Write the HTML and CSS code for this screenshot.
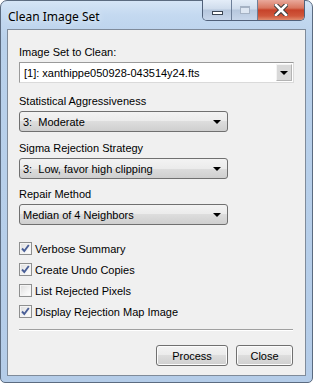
FILE: index.html
```html
<!DOCTYPE html>
<html lang="en">

<head>
    <meta charset="UTF-8">
    <title>Clean Image Set</title>
    <link rel="stylesheet" href="styles.css">
</head>

<body>
    <div class="window">
        <div class="titlebar">
            <div class="title">Clean Image Set</div>
            <div class="caption-buttons">
                <div class="cap-btn cap-min"><span class="min-glyph"></span></div>
                <div class="cap-btn cap-max"><span class="max-glyph"></span></div>
                <div class="cap-btn cap-close">
                    <svg width="14" height="12" viewBox="0 0 14 12">
                        <path d="M2 1 L12 11 M12 1 L2 11" stroke="#3b3b3b" stroke-width="4.6" stroke-linecap="square" />
                        <path d="M2 1 L12 11 M12 1 L2 11" stroke="#ffffff" stroke-width="2.6" stroke-linecap="square" />
                    </svg>
                </div>
            </div>
        </div>

        <div class="client">
            <div class="field field-set">
                <label>Image Set to Clean:</label>
                <div class="combo-edit">
                    <span class="combo-text">[1]: xanthippe050928-043514y24.fts</span>
                    <span class="combo-edit-btn"><span class="arrow"></span></span>
                </div>
            </div>

            <div class="field field-stat">
                <label>Statistical Aggressiveness</label>
                <div class="combo-list">
                    <span class="combo-text">3:&nbsp; Moderate</span>
                    <span class="arrow"></span>
                </div>
            </div>

            <div class="field field-sigma">
                <label>Sigma Rejection Strategy</label>
                <div class="combo-list">
                    <span class="combo-text">3:&nbsp; Low, favor high clipping</span>
                    <span class="arrow"></span>
                </div>
            </div>

            <div class="field field-repair">
                <label>Repair Method</label>
                <div class="combo-list">
                    <span class="combo-text">Median of 4 Neighbors</span>
                    <span class="arrow"></span>
                </div>
            </div>

            <div class="checks">
                <div class="check-row">
                    <span class="box checked"></span>Verbose Summary
                </div>
                <div class="check-row">
                    <span class="box checked"></span>Create Undo Copies
                </div>
                <div class="check-row">
                    <span class="box"></span>List Rejected Pixels
                </div>
                <div class="check-row">
                    <span class="box checked"></span>Display Rejection Map Image
                </div>
            </div>

            <div class="separator"></div>

            <div class="actions">
                <button class="btn btn-process">Process</button>
                <button class="btn btn-close">Close</button>
            </div>
        </div>
    </div>
</body>

</html>
```

FILE: styles.css
```css
* {
    margin: 0;
    padding: 0;
    box-sizing: border-box;
}

body {
    width: 313px;
    height: 383px;
    background: #ffffff;
    font-family: 'Liberation Sans', Arial, sans-serif;
    font-size: 11px;
    color: #000000;
    overflow: hidden;
}

.window {
    width: 313px;
    height: 383px;
    display: flex;
    flex-direction: column;
    border: 1px solid #5b6b80;
    border-radius: 7px 7px 5px 5px;
    background: linear-gradient(#d5e5f6 0, #c4d9f0 14px, #b9d1eb 40px, #b4cce8 100%);
    padding: 0 6px 6px 6px;
}

/* title bar */
.titlebar {
    height: 28px;
    display: flex;
    justify-content: space-between;
    align-items: flex-start;
}

.title {
    font-family: 'Noto Sans', sans-serif;
    font-size: 12px;
    padding: 7px 0 0 1px;
    text-shadow: 0 0 6px rgba(255, 255, 255, 0.9);
}

.caption-buttons {
    display: flex;
    margin-top: -1px;
    margin-right: 1px;
    height: 21px;
    border: 1px solid #51617a;
    border-top: none;
    border-radius: 0 0 5px 5px;
    overflow: hidden;
}

.cap-btn {
    height: 100%;
    display: flex;
    justify-content: center;
    align-items: center;
    background: linear-gradient(#e4edf8 0, #cfdcec 45%, #b6c7dd 50%, #c7d6ea 100%);
    border-right: 1px solid #6d7f99;
}

.cap-min {
    width: 29px;
}

.cap-max {
    width: 26px;
}

.cap-close {
    width: 46px;
    border-right: none;
    background: linear-gradient(#e9a99b 0, #d8765f 40%, #c7432a 50%, #d0583c 80%, #e08b6d 100%);
}

.min-glyph {
    width: 11px;
    height: 4px;
    margin-top: 6px;
    background: #ffffff;
    border: 1px solid #3c4654;
}

.max-glyph {
    width: 10px;
    height: 8px;
    border: 1px solid #a5b2c4;
    border-top-width: 2px;
    background: #dde6f2;
}

/* client area */
.client {
    flex: 1;
    background: #f0f0f0;
    border: 1px solid #7f8b9a;
    padding: 16px 11px 0 11px;
    display: flex;
    flex-direction: column;
}

.field {
    display: flex;
    flex-direction: column;
}

.field-set {
    margin-bottom: 12px;
}

.field-stat {
    margin-bottom: 10px;
}

.field-sigma {
    margin-bottom: 9px;
}

.field-repair {
    margin-bottom: 12px;
}

.field label {
    line-height: 13px;
    margin-bottom: 3px;
}

.combo-text {
    flex: 1;
    white-space: nowrap;
    overflow: hidden;
}

.arrow {
    width: 0;
    height: 0;
    border-left: 4px solid transparent;
    border-right: 4px solid transparent;
    border-top: 4px solid #000000;
}

.combo-edit {
    width: 275px;
    height: 21px;
    display: flex;
    align-items: center;
    background: #ffffff;
    border: 1px solid #9a9a9a;
    border-right-color: #dadada;
    border-bottom-color: #dadada;
    padding: 0 1px 0 4px;
}

.combo-edit-btn {
    width: 16px;
    height: 17px;
    display: flex;
    justify-content: center;
    align-items: center;
    background: #d9d9d9;
    border: 1px solid #b4b4b4;
    border-top-color: #f4f4f4;
    border-left-color: #f4f4f4;
}

.combo-list {
    width: 209px;
    height: 21px;
    display: flex;
    align-items: center;
    border: 1px solid #707070;
    border-radius: 3px;
    background: linear-gradient(#f3f3f3 0, #ebebeb 50%, #dddddd 50%, #cfcfcf 100%);
    padding: 0 6px 0 3px;
}

/* check boxes */
.checks {
    display: flex;
    flex-direction: column;
    margin-top: 1px;
}

.check-row {
    height: 21px;
    display: flex;
    align-items: center;
}

.box {
    width: 13px;
    height: 13px;
    margin-right: 3px;
    border: 1px solid #8e8f8f;
    background: linear-gradient(135deg, #dcdcdc 0, #f4f4f4 60%, #ffffff 100%);
    box-shadow: inset 0 0 0 1px #f4f4f4;
}

.box.checked {
    background:
        url("data:image/svg+xml;utf8,<svg xmlns='http://www.w3.org/2000/svg' width='11' height='11' viewBox='0 0 11 11'><path d='M2 5.5 L4.3 8 L8.8 2' fill='none' stroke='%234a5f97' stroke-width='1.9'/></svg>") center / 11px 11px no-repeat,
        linear-gradient(135deg, #dcdcdc 0, #f4f4f4 60%, #ffffff 100%);
}

/* bottom */
.separator {
    margin-top: 7px;
    width: 274px;
    border-top: 1px solid #a0a0a0;
    border-bottom: 1px solid #ffffff;
}

.actions {
    display: flex;
    justify-content: flex-end;
    gap: 8px;
    margin-top: 14px;
    width: 274px;
}

.btn {
    height: 21px;
    font-family: 'Liberation Sans', Arial, sans-serif;
    font-size: 11px;
    color: #000000;
    border: 1px solid #707070;
    border-radius: 3px;
    background: linear-gradient(#f3f3f3 0, #ebebeb 50%, #dddddd 50%, #cfcfcf 100%);
    box-shadow: inset 0 0 0 1px #fcfcfc;
}

.btn-process {
    width: 72px;
}

.btn-close {
    width: 57px;
}
```
